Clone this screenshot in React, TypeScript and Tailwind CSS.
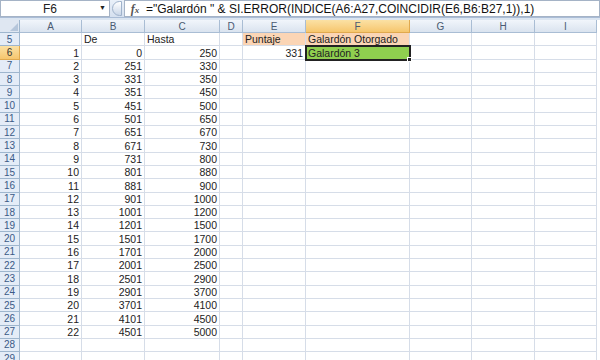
const cols = [
  { key: "A", w: "w-[62px]" },
  { key: "B", w: "w-[63px]" },
  { key: "C", w: "w-[75px]" },
  { key: "D", w: "w-[23px]" },
  { key: "E", w: "w-[63px]" },
  { key: "F", w: "w-[104px]" },
  { key: "G", w: "w-[62px]" },
  { key: "H", w: "w-[63px]" },
  { key: "I", w: "w-[62px]" },
];

const ranges: [number, number, number][] = [
  [1, 0, 250],
  [2, 251, 330],
  [3, 331, 350],
  [4, 351, 450],
  [5, 451, 500],
  [6, 501, 650],
  [7, 651, 670],
  [8, 671, 730],
  [9, 731, 800],
  [10, 801, 880],
  [11, 881, 900],
  [12, 901, 1000],
  [13, 1001, 1200],
  [14, 1201, 1500],
  [15, 1501, 1700],
  [16, 1701, 2000],
  [17, 2001, 2500],
  [18, 2501, 2900],
  [19, 2901, 3700],
  [20, 3701, 4100],
  [21, 4101, 4500],
  [22, 4501, 5000],
];

type Cell = { text?: string | number; align?: "l" | "r"; fill?: string };

function rowCells(r: number): Record<string, Cell> {
  if (r === 5)
    return {
      B: { text: "De" },
      C: { text: "Hasta" },
      E: { text: "Puntaje", fill: "bg-[#fbd5b5]" },
      F: { text: "Galardón Otorgado", fill: "bg-[#fbd5b5]" },
    };
  const d = ranges[r - 6];
  const out: Record<string, Cell> = {};
  if (d) {
    out.A = { text: d[0], align: "r" };
    out.B = { text: d[1], align: "r" };
    out.C = { text: d[2], align: "r" };
  }
  if (r === 6) {
    out.E = { text: 331, align: "r" };
    out.F = { text: "Galardón 3", fill: "bg-[#8fcf4f]" };
  }
  return out;
}

const rows = Array.from({ length: 25 }, (_, i) => i + 5);

export default function App() {
  return (
    <div
      className="w-[600px] h-[360px] overflow-hidden bg-white text-[10.5px] text-[#222]"
      style={{ fontFamily: '"Liberation Sans", Arial, sans-serif' }}
    >
      {/* formula bar */}
      <div className="flex h-[18px] items-center bg-gradient-to-b from-[#e9f0f9] to-[#d5e0ef] border-b border-[#a9bcd6]">
        <div className="flex h-[17px] w-[110px] items-center bg-white border border-[#a5b3c6]">
          <span className="flex-1 text-center text-[12px] text-[#222]">F6</span>
          <span className="mr-[3px] text-[7px] text-[#222]">▼</span>
        </div>
        <div className="ml-[2px] h-[15px] w-[10px] rounded-l-full border border-[#9fb2cb] bg-gradient-to-b from-white to-[#c9d6e8]" />
        <div className="ml-[2px] flex h-[17px] flex-1 items-center bg-white border border-[#a5b3c6]">
          <span
            className="w-[20px] text-center text-[12px] italic font-bold text-[#555]"
            style={{ fontFamily: '"Liberation Serif", serif' }}
          >
            f<span className="text-[9px]">x</span>
          </span>
          <span className="ml-[1px] whitespace-nowrap text-[12px] text-[#111]">
            ="Galardón " &amp; SI.ERROR(INDICE(A6:A27,COINCIDIR(E6,B6:B27,1)),1)
          </span>
        </div>
      </div>
      <div className="h-[2px] bg-[#dbe5f1]" />

      {/* column headers */}
      <div className="flex h-[13px] text-[10px]">
        <div className="relative w-[20px] shrink-0 bg-[#dfe7f2] border-r border-b border-[#9eb6ce]">
          <div className="absolute right-[1px] bottom-[1px] h-0 w-0 border-l-[8px] border-l-transparent border-b-[8px] border-b-[#b5c6db]" />
        </div>
        {cols.map((c) => (
          <div
            key={c.key}
            className={`${c.w} shrink-0 flex items-center justify-center border-r border-b text-[#4a5a72] ${
              c.key === "F"
                ? "bg-gradient-to-b from-[#fbe1a4] to-[#f6c66d] border-[#e0a94e]"
                : "bg-gradient-to-b from-[#f1f5fb] to-[#dae3ef] border-[#a9bdd4]"
            }`}
          >
            {c.key}
          </div>
        ))}
      </div>

      {/* rows */}
      {rows.map((r) => {
        const cells = rowCells(r);
        return (
          <div key={r} className="flex h-[13.3px]">
            <div
              className={`w-[20px] shrink-0 flex items-center justify-center border-r border-b text-[10px] ${
                r === 6
                  ? "bg-gradient-to-b from-[#fbe1a4] to-[#f6c66d] border-[#e0a94e] text-[#333]"
                  : "bg-[#e4ecf7] border-[#9eb6ce] text-[#3b5a86]"
              }`}
            >
              {r}
            </div>
            {cols.map((c) => {
              const cell = cells[c.key];
              const sel = r === 6 && c.key === "F";
              return (
                <div
                  key={c.key}
                  className={`${c.w} shrink-0 flex items-end pb-[0.5px] leading-none overflow-visible whitespace-nowrap border-r border-b border-[#d6dde8] ${
                    cell?.fill ?? ""
                  } ${cell?.align === "r" ? "justify-end pr-[2px]" : "pl-[2px]"} ${
                    sel ? "relative outline-2 outline-[#222] -outline-offset-1" : ""
                  }`}
                >
                  {cell?.text}
                  {sel && (
                    <span className="absolute -right-[3px] -bottom-[3px] h-[5px] w-[5px] bg-[#222] border border-white" />
                  )}
                </div>
              );
            })}
          </div>
        );
      })}
    </div>
  );
}
